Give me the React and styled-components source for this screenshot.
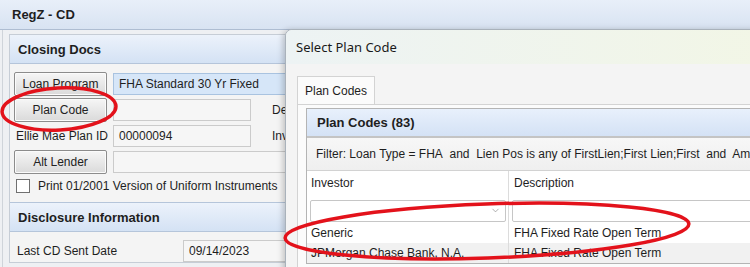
import React from "react";
import styled, { createGlobalStyle } from "styled-components";
import { ChevronDown } from "lucide-react";

const GlobalStyle = createGlobalStyle`
  html, body {
    margin: 0;
    padding: 0;
    width: 750px;
    height: 267px;
    overflow: hidden;
  }
  body {
    font-family: "Liberation Sans", Arial, sans-serif;
    font-size: 12px;
    color: #1e1e1e;
    background: #eceef1;
  }
`;

const Screen = styled.div`
  position: relative;
  width: 750px;
  height: 267px;
  overflow: hidden;
`;

const Window = styled.div`
  display: flex;
  flex-direction: column;
  height: 100%;
  background: #eef0f3;
`;

const TitleBar = styled.div`
  flex: none;
  height: 29px;
  display: flex;
  align-items: center;
  padding-left: 12px;
  font-size: 13px;
  font-weight: bold;
  background: linear-gradient(#e8eff9, #d8e3f2);
  border-bottom: 1px solid #aebdd2;
`;

const Content = styled.div`
  flex: 1;
  margin-left: 2px;
  padding: 4px 0 0 6px;
  border-left: 1px solid #cfd4da;
`;

const Panel = styled.div`
  width: 760px;
  background: #f4f4f4;
  border: 1px solid #c6cdd6;
  border-right: none;
`;

const SectionHeader = styled.div`
  height: 28px;
  display: flex;
  align-items: center;
  padding-left: 8px;
  font-size: 13px;
  font-weight: bold;
  background: linear-gradient(#ecf2fb, #d4e2f4);
  border-bottom: 1px solid #b5c5da;
  ${(p) => p.$divider && "border-top: 1px solid #b5c5da;"}
`;

const Form = styled.div`
  display: flex;
  flex-direction: column;
  gap: 2px;
  padding: 8px 0 7px 4px;
`;

const Row = styled.div`
  display: flex;
  align-items: center;
  gap: 6px;
  height: 24px;
`;

const Button = styled.button`
  width: 93px;
  height: 24px;
  padding: 0;
  font-family: inherit;
  font-size: 12px;
  color: #222;
  background: linear-gradient(#f6f6f6, #dadada);
  border: 1px solid #8c8c8c;
  border-radius: 2px;
  box-shadow: inset 0 0 0 1px #fbfbfb;
`;

const Label = styled.span`
  box-sizing: border-box;
  width: ${(p) => (p.$w ? `${p.$w}px` : "auto")};
  flex: none;
  padding-left: ${(p) => p.$pl || 0}px;
  white-space: nowrap;
`;

const Field = styled.div`
  width: ${(p) => (p.$w ? `${p.$w}px` : "auto")};
  flex: ${(p) => (p.$w ? "none" : 1)};
  height: 22px;
  box-sizing: border-box;
  display: flex;
  align-items: center;
  padding-left: 5px;
  background: ${(p) => (p.$blue ? "#d6e6f8" : "#f6f6f6")};
  border: 1px solid ${(p) => (p.$blue ? "#a9c3e0" : "#cbcbcb")};
  font-size: 12px;
`;

const CheckRow = styled.label`
  display: flex;
  align-items: center;
  gap: 8px;
  height: 18px;
  margin-top: 1px;
  padding-left: 2px;
`;

const Box = styled.span`
  width: 12px;
  height: 12px;
  background: #fff;
  border: 1px solid #707070;
`;

const DateRow = styled.div`
  display: flex;
  align-items: center;
  padding: 8px 0 0 7px;
`;

/* dialog */

const Dialog = styled.div`
  position: absolute;
  left: 285px;
  top: 29px;
  width: 480px;
  height: 250px;
  background: #f4f4f4;
  border: 1px solid #a9b2bb;
  border-top-left-radius: 7px;
  box-shadow: -2px 1px 6px rgba(0, 0, 0, 0.22);
  overflow: hidden;
`;

const DialogTitle = styled.div`
  height: 34px;
  display: flex;
  align-items: center;
  padding-left: 10px;
  font-family: "Noto Sans", "Open Sans", sans-serif;
  font-size: 13px;
  color: #1a1a1a;
  background: linear-gradient(90deg, #edf3f4, #f2f6e6);
`;

const DialogBody = styled.div`
  padding: 12px 0 0 11px;
`;

const Tab = styled.div`
  width: 78px;
  height: 28px;
  box-sizing: border-box;
  display: flex;
  align-items: center;
  justify-content: center;
  font-size: 12px;
  background: #fbfbfb;
  border: 1px solid #d3d3d3;
  border-bottom: none;
`;

const TabPanel = styled.div`
  border-top: 1px solid #d3d3d3;
  border-left: 1px solid #d3d3d3;
  background: #fbfbfb;
  padding: 3px 0 0 8px;
  height: 200px;
`;

const Grid = styled.div`
  border: 1px solid #b4b4b4;
  border-right: none;
  background: #fff;
`;

const GridHeader = styled.div`
  height: 27px;
  display: flex;
  align-items: center;
  padding-left: 10px;
  font-size: 13px;
  font-weight: bold;
  background: linear-gradient(#e8f0fc, #d4e2f5);
  border-bottom: 2px solid #c4c4c4;
`;

const FilterBar = styled.div`
  height: 32px;
  display: flex;
  align-items: center;
  padding-left: 9px;
  white-space: nowrap;
  background: linear-gradient(#f7f7f7, #efefef);
  border-bottom: 1px solid #d2d2d2;
`;

const TableRow = styled.div`
  display: grid;
  grid-template-columns: 201px 1fr;
  height: ${(p) => p.$h || 20}px;
  background: ${(p) => p.$bg || "#fff"};
`;

const Cell = styled.div`
  display: flex;
  align-items: ${(p) => (p.$top ? "flex-start" : "center")};
  padding: ${(p) => (p.$top ? "5px" : "0")} 0 0 ${(p) => p.$pl || 4}px;
  white-space: nowrap;
  overflow: hidden;
  & + & {
    border-left: 1px solid #dcdcdc;
  }
`;

const FilterCell = styled.div`
  display: flex;
  align-items: center;
  padding: 0 2px 0 3px;
  & + & {
    border-left: 1px solid #dcdcdc;
  }
`;

const FilterInput = styled.div`
  flex: 1;
  height: 22px;
  box-sizing: border-box;
  display: flex;
  align-items: center;
  justify-content: flex-end;
  padding-right: 4px;
  background: #fff;
  border: 1px solid #c6c6c6;
  border-radius: 2px;
  color: #8a8a8a;
`;

const Overlay = styled.svg`
  position: absolute;
  left: 0;
  top: 0;
  pointer-events: none;
`;

export default function App() {
  return (
    <Screen>
      <GlobalStyle />
      <Window>
        <TitleBar>RegZ - CD</TitleBar>
        <Content>
          <Panel>
            <SectionHeader>Closing Docs</SectionHeader>
            <Form>
              <Row>
                <Button>Loan Program</Button>
                <Field $blue>FHA Standard 30 Yr Fixed</Field>
              </Row>
              <Row>
                <Button>Plan Code</Button>
                <Field $w={138} />
                <Label $pl={15}>Description</Label>
              </Row>
              <Row>
                <Label $w={93} $pl={2}>Ellie Mae Plan ID</Label>
                <Field $w={138}>00000094</Field>
                <Label $pl={15}>Investor</Label>
              </Row>
              <Row>
                <Button>Alt Lender</Button>
                <Field />
              </Row>
              <CheckRow>
                <Box />
                Print 01/2001 Version of Uniform Instruments
              </CheckRow>
            </Form>
            <SectionHeader $divider>Disclosure Information</SectionHeader>
            <DateRow>
              <Label $w={166}>Last CD Sent Date</Label>
              <Field $w={200}>09/14/2023</Field>
            </DateRow>
          </Panel>
        </Content>
      </Window>

      <Dialog>
        <DialogTitle>Select Plan Code</DialogTitle>
        <DialogBody>
          <Tab>Plan Codes</Tab>
          <TabPanel>
            <Grid>
              <GridHeader>Plan Codes (83)</GridHeader>
              <FilterBar>
                Filter: Loan Type = FHA&nbsp; and&nbsp; Lien Pos is any of FirstLien;First Lien;First&nbsp; and&nbsp; Amortization Type = Fixed
              </FilterBar>
              <TableRow $h={27}>
                <Cell $top>Investor</Cell>
                <Cell $top $pl={5}>Description</Cell>
              </TableRow>
              <TableRow $h={25}>
                <FilterCell>
                  <FilterInput>
                    <ChevronDown size={11} strokeWidth={1.5} />
                  </FilterInput>
                </FilterCell>
                <FilterCell>
                  <FilterInput />
                </FilterCell>
              </TableRow>
              <TableRow>
                <Cell>Generic</Cell>
                <Cell $pl={5}>FHA Fixed Rate Open Term</Cell>
              </TableRow>
              <TableRow $bg="#f1f1f1">
                <Cell>JPMorgan Chase Bank, N.A.</Cell>
                <Cell $pl={5}>FHA Fixed Rate Open Term</Cell>
              </TableRow>
            </Grid>
          </TabPanel>
        </DialogBody>
      </Dialog>

      <Overlay width="750" height="267" viewBox="0 0 750 267">
        <g fill="none" stroke="#e3121b" strokeWidth="3.5">
          <ellipse cx="59" cy="109" rx="57" ry="21" transform="rotate(-3 59 109)" />
          <ellipse cx="487" cy="231" rx="202" ry="27" transform="rotate(-2 487 231)" />
        </g>
      </Overlay>
    </Screen>
  );
}
